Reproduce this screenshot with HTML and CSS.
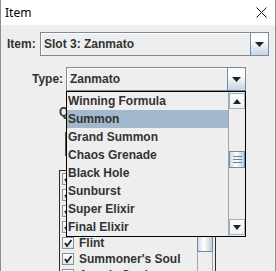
FILE: index.html
```html
<!DOCTYPE html>
<html lang="en">
<head>
    <meta charset="UTF-8">
    <title>Item</title>
    <link rel="stylesheet" href="styles.css">
</head>
<body>
<div class="window">
    <div class="titlebar">
        <span class="title">Item</span>
        <svg class="close" width="11" height="11" viewBox="0 0 11 11">
            <path d="M0.5 0.5 L10.5 10.5 M10.5 0.5 L0.5 10.5" stroke="#111" stroke-width="1" fill="none"/>
        </svg>
    </div>
    <div class="content">
        <div class="row row-item">
            <label class="lbl lbl-item">Item:</label>
            <div class="combo combo-item">
                <span class="combo-text">Slot 3: Zanmato</span>
                <span class="combo-btn"><svg width="9" height="5" viewBox="0 0 9 5"><polygon points="0,0 9,0 4.5,5" fill="#222"/></svg></span>
            </div>
        </div>
        <div class="row row-type">
            <label class="lbl lbl-type">Type:</label>
            <div class="combo combo-type">
                <span class="combo-text">Zanmato</span>
                <span class="combo-btn"><svg width="9" height="5" viewBox="0 0 9 5"><polygon points="0,0 9,0 4.5,5" fill="#222"/></svg></span>
            </div>
        </div>
        <div class="qty-row">Q</div>
        <div class="field"></div>
        <div class="list">
            <div class="list-rows">
                <div class="check-row"><span class="box"><svg width="10" height="10" viewBox="0 0 10 10"><polyline points="2,5 4,8 8.5,2" stroke="#222" stroke-width="1.8" fill="none"/></svg></span></div>
                <div class="check-row"><span class="box"><svg width="10" height="10" viewBox="0 0 10 10"><polyline points="2,5 4,8 8.5,2" stroke="#222" stroke-width="1.8" fill="none"/></svg></span></div>
                <div class="check-row"><span class="box"><svg width="10" height="10" viewBox="0 0 10 10"><polyline points="2,5 4,8 8.5,2" stroke="#222" stroke-width="1.8" fill="none"/></svg></span></div>
                <div class="check-row"><span class="box"><svg width="10" height="10" viewBox="0 0 10 10"><polyline points="2,5 4,8 8.5,2" stroke="#222" stroke-width="1.8" fill="none"/></svg></span></div>
                <div class="check-row"><span class="box"><svg width="10" height="10" viewBox="0 0 10 10"><polyline points="2,5 4,8 8.5,2" stroke="#222" stroke-width="1.8" fill="none"/></svg></span>Flint</div>
                <div class="check-row"><span class="box"><svg width="10" height="10" viewBox="0 0 10 10"><polyline points="2,5 4,8 8.5,2" stroke="#222" stroke-width="1.8" fill="none"/></svg></span>Summoner's Soul</div>
                <div class="check-row"><span class="box"><svg width="10" height="10" viewBox="0 0 10 10"><polyline points="2,5 4,8 8.5,2" stroke="#222" stroke-width="1.8" fill="none"/></svg></span>Aeon's Soul</div>
            </div>
            <div class="list-scroll">
                <div class="list-thumb"></div>
            </div>
        </div>
    </div>

    <!-- open popup of the Type combo -->
    <div class="popup">
        <ul class="popup-list">
            <li>Winning Formula</li>
            <li class="selected">Summon</li>
            <li>Grand Summon</li>
            <li>Chaos Grenade</li>
            <li>Black Hole</li>
            <li>Sunburst</li>
            <li>Super Elixir</li>
            <li>Final Elixir</li>
        </ul>
        <div class="popup-scroll">
            <div class="sb-btn"><svg width="8" height="5" viewBox="0 0 8 5"><polygon points="0,5 8,5 4,0" fill="#222"/></svg></div>
            <div class="sb-track">
                <div class="sb-thumb"><span></span><span></span><span></span></div>
            </div>
            <div class="sb-btn"><svg width="8" height="5" viewBox="0 0 8 5"><polygon points="0,0 8,0 4,5" fill="#222"/></svg></div>
        </div>
    </div>
</div>
</body>
</html>
```

FILE: styles.css
```css
body {
    margin: 0;
    background: #eeeeee;
}
.window {
    position: relative;
    width: 276px;
    height: 271px;
    box-sizing: border-box;
    border-left: 1px solid #8e8e8e;
    border-right: 1px solid #8e8e8e;
    background: #eeeeee;
    overflow: hidden;
    font: bold 12px "Liberation Sans", Arial, sans-serif;
    color: #333333;
}
.titlebar {
    height: 25px;
    background: #ffffff;
    display: flex;
    align-items: center;
    justify-content: space-between;
    padding: 0 8px 0 4px;
}
.title {
    font: 12px "Noto Sans", "Open Sans", sans-serif;
    color: #000000;
}
.close {
    display: block;
}
.content {
    padding: 7px 6px 0 6px;
}
.row {
    display: flex;
    align-items: center;
    height: 24px;
}
.lbl {
    flex: none;
}
.lbl-item {
    width: 33px;
}
.row-type {
    margin-top: 11px;
    padding-left: 25px;
}
.lbl-type {
    width: 34px;
}
.combo {
    height: 24px;
    box-sizing: border-box;
    border: 1px solid #7a8a99;
    background: #eeeeee;
    display: flex;
    box-shadow: inset 1px 1px 0 #ffffff;
}
.combo-item {
    flex: 1;
}
.combo-type {
    width: 180px;
}
.combo-text {
    flex: 1;
    padding-left: 3px;
    line-height: 22px;
}
.combo-btn {
    width: 17px;
    border-left: 1px solid #7a8a99;
    display: flex;
    align-items: center;
    justify-content: center;
    background: linear-gradient(#f6f9fc, #ffffff 30%, #c4d5e6);
}
.qty-row {
    margin-top: 13px;
    height: 16px;
    line-height: 16px;
    padding-left: 52px;
}
.field {
    margin: 12px 0 0 58px;
    width: 150px;
    height: 24px;
    box-sizing: border-box;
    border: 1px solid #555555;
}
.list {
    margin: 14px 0 0 52px;
    width: 157px;
    height: 130px;
    box-sizing: border-box;
    border: 1px solid #2b2b2b;
    display: flex;
}
.list-rows {
    flex: 1;
}
.check-row {
    height: 16px;
    display: flex;
    align-items: center;
    padding-left: 2px;
    white-space: nowrap;
}
.box {
    width: 12px;
    height: 12px;
    box-sizing: border-box;
    border: 1px solid #8494a4;
    background: linear-gradient(#ffffff, #dfe7ef);
    margin-right: 5px;
    display: flex;
    align-items: center;
    justify-content: center;
}
.box svg {
    display: block;
}
.list-scroll {
    width: 16px;
    margin-right: 2px;
    box-sizing: border-box;
    border-left: 1px solid #9aa8b6;
    border-right: 1px solid #9aa8b6;
    background: #eeeeee;
}
.list-thumb {
    margin-top: 50px;
    height: 29px;
    border: 1px solid #7a8a99;
    margin-left: -1px;
    margin-right: -1px;
    background: linear-gradient(90deg, #c8ddf2, #ffffff 40%, #b8cfe5);
}

/* popup */
.popup {
    position: absolute;
    left: 65px;
    top: 91px;
    width: 180px;
    height: 146px;
    box-sizing: border-box;
    border: 1px solid #000000;
    background: #eeeeee;
    display: flex;
}
.popup-list {
    flex: 1;
    list-style: none;
    margin: 0;
    padding: 0;
}
.popup-list li {
    height: 18px;
    line-height: 18px;
    padding-left: 1px;
}
.popup-list .selected {
    background: #a3b8cc;
}
.popup-scroll {
    width: 17px;
    box-sizing: border-box;
    border-left: 1px solid #9aa8b6;
    padding: 1px 0;
    display: flex;
    flex-direction: column;
}
.sb-btn {
    height: 16px;
    box-sizing: border-box;
    border: 1px solid #a4b0bc;
    background: linear-gradient(#fafcfd, #eef2f6);
    display: flex;
    align-items: center;
    justify-content: center;
}
.sb-track {
    flex: 1;
}
.sb-thumb {
    margin-top: 42px;
    height: 17px;
    box-sizing: border-box;
    border: 1px solid #7a8a99;
    background: linear-gradient(90deg, #c8ddf2, #ffffff 45%, #b8cfe5);
    display: flex;
    flex-direction: column;
    align-items: center;
    justify-content: center;
    gap: 2px;
}
.sb-thumb span {
    width: 9px;
    height: 1px;
    background: #6e8296;
}
```
